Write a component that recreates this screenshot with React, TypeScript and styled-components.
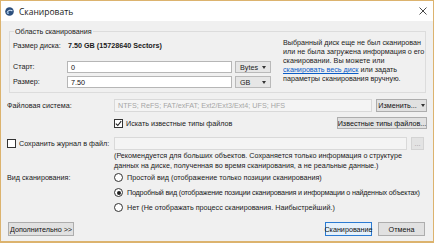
import styled, { createGlobalStyle } from "styled-components";

const GlobalStyle = createGlobalStyle`
  html, body {
    margin: 0;
    padding: 0;
    background: #ffffff;
  }
  body {
    font-family: "Liberation Sans", Arial, sans-serif;
    font-size: 7.2px;
    color: #1a1a1a;
  }
`;

const Window = styled.div`
  width: 434px;
  height: 243px;
  box-sizing: border-box;
  border: 1px solid #dcb36e;
  border-bottom-width: 2px;
  display: flex;
  flex-direction: column;
  background: #f0f0f0;
`;

const TitleBar = styled.div`
  height: 20px;
  flex: none;
  background: #ffffff;
  display: flex;
  align-items: center;
  padding: 0 6px 0 4px;
  gap: 5px;
`;

const Title = styled.span`
  font-family: "Open Sans", "Liberation Sans", sans-serif;
  font-size: 8.5px;
  color: #222;
  flex: 1;
`;

const CloseIcon = styled.svg`
  width: 8px;
  height: 8px;
`;

const Body = styled.div`
  flex: 1;
  display: flex;
  flex-direction: column;
  padding: 0 6px 0 6px;
`;

const GroupBox = styled.fieldset`
  margin: 6px 1px 0 2px;
  padding: 4px 3px 4px 3px;
  border: 1px solid #dcdcdc;
  display: flex;
  min-width: 0;
`;

const Legend = styled.legend`
  padding: 0 1px;
  margin-left: 1px;
  line-height: 9px;
`;

const SizeGrid = styled.div`
  display: grid;
  grid-template-columns: 51px 165px 36px;
  grid-template-rows: 18px 12px 12px;
  column-gap: 3px;
  row-gap: 3px;
  align-items: center;
  flex: none;
`;

const Label = styled.span`
  white-space: nowrap;
  line-height: 12px;
`;

const TopLabel = styled(Label)`
  align-self: start;
`;

const Strong = styled.b`
  align-self: start;
  grid-column: span 2;
  line-height: 12px;
  white-space: nowrap;
  margin-left: 1px;
`;

const TextBox = styled.div<{ $disabled?: boolean }>`
  box-sizing: border-box;
  height: 100%;
  background: ${(p) => (p.$disabled ? "#f4f4f4" : "#ffffff")};
  border: 1px solid ${(p) => (p.$disabled ? "#d9d9d9" : "#b6b6b6")};
  color: ${(p) => (p.$disabled ? "#a6a6a6" : "#111")};
  padding: 0 3px;
  display: flex;
  align-items: center;
  white-space: nowrap;
  overflow: hidden;
  min-width: 0;
  flex: 1;
`;

const Select = styled.div`
  box-sizing: border-box;
  height: 100%;
  background: #e6e6e6;
  border: 1px solid #b9b9b9;
  display: flex;
  align-items: center;
  justify-content: space-between;
  padding: 0 4px;
`;

const Caret = styled.span`
  width: 0;
  height: 0;
  border-left: 2.5px solid transparent;
  border-right: 2.5px solid transparent;
  border-top: 3px solid #333;
`;

const Note = styled.div`
  margin: -2px 0 0 12px;
  line-height: 9px;
  color: #222;
  white-space: nowrap;
`;

const Link = styled.a`
  color: #0b5cc7;
  text-decoration: underline;
`;

const Row = styled.div<{ $top: number; $h: number }>`
  display: grid;
  grid-template-columns: 107px 1fr;
  align-items: center;
  margin-top: ${(p) => p.$top}px;
  height: ${(p) => p.$h}px;
`;

const Content = styled.div`
  display: flex;
  align-items: center;
  height: 100%;
  gap: 4px;
  min-width: 0;
`;

const Button = styled.div<{ $w: number; $primary?: boolean; $disabled?: boolean }>`
  box-sizing: border-box;
  width: ${(p) => p.$w}px;
  height: 100%;
  flex: none;
  background: ${(p) => (p.$primary ? "#e5f1fb" : p.$disabled ? "#e3e3e3" : "#e1e1e1")};
  border: 1px solid ${(p) => (p.$primary ? "#2b7bd2" : p.$disabled ? "#d3d3d3" : "#adadad")};
  color: ${(p) => (p.$disabled ? "#a0a0a0" : "#111")};
  display: flex;
  align-items: center;
  justify-content: center;
  gap: 4px;
  white-space: nowrap;
`;

const CheckLine = styled.label`
  display: flex;
  align-items: center;
  gap: 3px;
  white-space: nowrap;
  flex: 1;
`;

const Box = styled.span<{ $round?: boolean }>`
  box-sizing: border-box;
  width: 9px;
  height: 9px;
  flex: none;
  background: #fff;
  border: 1px solid #333;
  border-radius: ${(p) => (p.$round ? "50%" : "0")};
  display: flex;
  align-items: center;
  justify-content: center;
`;

const Dot = styled.span`
  width: 4px;
  height: 4px;
  border-radius: 50%;
  background: #222;
`;

const NoteBlock = styled.div`
  margin: 1px 0 0 107px;
  line-height: 9.5px;
  white-space: nowrap;
`;

const ViewRow = styled.div`
  display: grid;
  grid-template-columns: 107px 1fr;
  align-items: start;
`;

const RadioList = styled.div`
  display: flex;
  flex-direction: column;
`;

const RadioLine = styled(CheckLine)<{ $tight?: boolean }>`
  flex: none;
  height: 15px;
  gap: 4px;
  letter-spacing: ${(p) => (p.$tight ? "-0.2px" : "normal")};
`;

const Footer = styled.div`
  display: flex;
  align-items: center;
  height: 14px;
  margin: 7px 2px 0 1px;
  gap: 6px;
`;

const Spacer = styled.div`
  flex: 1;
`;

const Check = () => (
  <svg width="7" height="7" viewBox="0 0 7 7">
    <path d="M0.8 3.6 L2.8 5.5 L6.2 1.2" fill="none" stroke="#222" strokeWidth="1.1" />
  </svg>
);

const AppIcon = () => (
  <svg width="9" height="9" viewBox="0 0 9 9">
    <circle cx="4.5" cy="4.5" r="4.3" fill="#2d4f7c" />
    <path d="M2 5.6 C3 3 6 2.6 7.4 4" fill="none" stroke="#cfe3f7" strokeWidth="1.1" />
    <circle cx="3" cy="6.2" r="0.9" fill="#9cc6ee" />
  </svg>
);

export default function App() {
  return (
    <>
      <GlobalStyle />
      <Window>
        <TitleBar>
          <AppIcon />
          <Title>Сканировать</Title>
          <CloseIcon viewBox="0 0 8 8">
            <path d="M0.5 0.5 L7.5 7.5 M7.5 0.5 L0.5 7.5" stroke="#333" strokeWidth="0.9" />
          </CloseIcon>
        </TitleBar>
        <Body>
          <GroupBox>
            <Legend>Область сканирования</Legend>
            <SizeGrid>
              <TopLabel>Размер диска:</TopLabel>
              <Strong>7.50 GB (15728640 Sectors)</Strong>
              <Label>Старт:</Label>
              <TextBox>0</TextBox>
              <Select>
                Bytes <Caret />
              </Select>
              <Label>Размер:</Label>
              <TextBox>7.50</TextBox>
              <Select>
                GB <Caret />
              </Select>
            </SizeGrid>
            <Note>
              Выбранный диск еще не был сканирован
              <br />
              или не была загружена информация о его
              <br />
              сканировании. Вы можете или
              <br />
              <Link>сканировать весь диск</Link> или задать
              <br />
              параметры сканирования вручную.
            </Note>
          </GroupBox>

          <Row $top={6} $h={13}>
            <Label>Файловая система:</Label>
            <Content>
              <TextBox $disabled>NTFS; ReFS; FAT/exFAT; Ext2/Ext3/Ext4; UFS; HFS</TextBox>
              <Button $w={51}>
                Изменить... <Caret />
              </Button>
            </Content>
          </Row>

          <Row $top={5} $h={12}>
            <span />
            <Content>
              <CheckLine>
                <Box>
                  <Check />
                </Box>
                Искать известные типы файлов
              </CheckLine>
              <Button $w={90}>Известные типы файлов...</Button>
            </Content>
          </Row>

          <Row $top={8} $h={13}>
            <CheckLine>
              <Box />
              Сохранить журнал в файл:
            </CheckLine>
            <Content>
              <TextBox $disabled />
              <Button $w={13} $disabled style={{ marginRight: 3 }}>
                ...
              </Button>
            </Content>
          </Row>

          <NoteBlock>
            (Рекомендуется для больших объектов. Сохраняется только информация о структуре
            <br />
            данных на диске, полученная во время сканирования, а не реальные данные.)
          </NoteBlock>

          <ViewRow>
            <Label style={{ lineHeight: "15px" }}>Вид сканирования:</Label>
            <RadioList>
              <RadioLine>
                <Box $round />
                Простой вид (отображение только позиции сканирования)
              </RadioLine>
              <RadioLine $tight>
                <Box $round>
                  <Dot />
                </Box>
                Подробный вид (отображение позиции сканирования и информации о найденных объектах)
              </RadioLine>
              <RadioLine>
                <Box $round />
                Нет (Не отображать процесс сканирования. Наибыстрейший.)
              </RadioLine>
            </RadioList>
          </ViewRow>

          <Footer>
            <Button $w={66}>Дополнительно &gt;&gt;</Button>
            <Spacer />
            <Button $w={47} $primary>
              Сканирование
            </Button>
            <Button $w={47}>Отмена</Button>
          </Footer>
        </Body>
      </Window>
    </>
  );
}
